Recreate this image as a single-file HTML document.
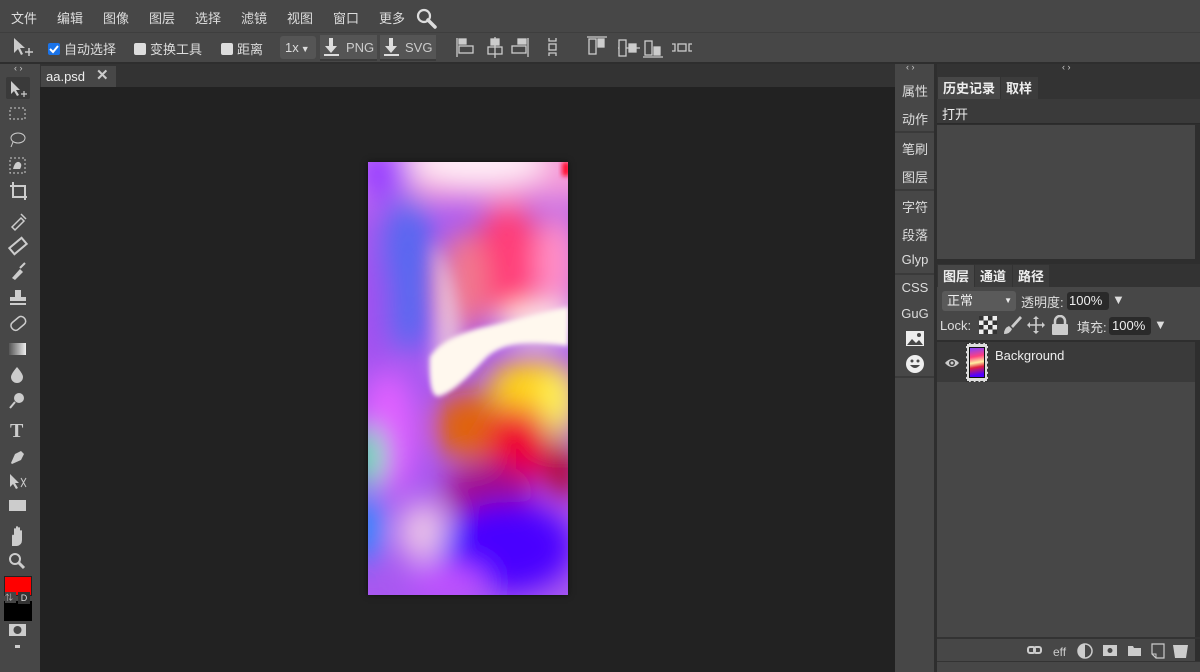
<!DOCTYPE html>
<html><head><meta charset="utf-8"><style>
*{box-sizing:border-box;margin:0;padding:0}
body{width:1200px;height:672px;overflow:hidden;background:#222;font-family:"Liberation Sans","Noto Sans CJK SC",sans-serif;color:#ddd;font-size:13px;position:relative}
.a{position:absolute}
.menu span{position:absolute;top:8px;font-size:13px;color:#ddd}
.bar{background:#474747}
.cb{display:inline-block;width:12px;height:12px;background:#ddd;border-radius:2px;vertical-align:-1px;margin-right:4px}
.rt{position:absolute;left:895px;width:40px;text-align:center;font-size:13px;color:#ddd}
.sep{position:absolute;height:2px;background:#3a3a3a}
.tab{position:absolute;height:23px;line-height:23px;font-weight:bold;font-size:13px;padding-left:5px;color:#eee}
</style></head><body>
<div class="a bar" style="left:0;top:0;width:1200px;height:32px"></div>
<div class="menu">
<span style="left:11px">文件</span><span style="left:57px">编辑</span><span style="left:103px">图像</span><span style="left:149px">图层</span><span style="left:195px">选择</span><span style="left:241px">滤镜</span><span style="left:287px">视图</span><span style="left:333px">窗口</span><span style="left:379px">更多</span>
</div>
<svg class="a" style="left:415px;top:7px" width="24" height="22"><circle cx="9" cy="9" r="6" fill="none" stroke="#ddd" stroke-width="2.2"/><line x1="13" y1="13" x2="20" y2="20" stroke="#ddd" stroke-width="3.5" stroke-linecap="round"/></svg>
<div class="a bar" style="left:0;top:32px;width:1200px;height:30px;border-top:1px solid #3e3e3e"></div>
<svg class="a" style="left:12px;top:37px" width="24" height="20"><path d="M2 1 L2 16 L6 12 L9 18 L11 17 L8 11 L13 11 Z" fill="#ccc"/><path d="M17 11v8M13 15h8" stroke="#ccc" stroke-width="1.5"/></svg>
<div class="a" style="left:48px;top:39px;font-size:13px"><span class="cb" style="background:#1a73e8;position:relative"><svg width="12" height="12" style="position:absolute;left:0;top:0"><path d="M2 6l3 3 5-6" stroke="#fff" stroke-width="2" fill="none"/></svg></span>自动选择</div>
<div class="a" style="left:134px;top:39px"><span class="cb"></span>变换工具</div>
<div class="a" style="left:221px;top:39px"><span class="cb"></span>距离</div>
<div class="a" style="left:280px;top:36px;width:36px;height:23px;background:#555;border-radius:3px;line-height:23px;padding-left:5px">1x<span style="font-size:9px;margin-left:2px">▼</span></div>
<div class="a" style="left:320px;top:35px;width:57px;height:26px;background:#555;border-bottom:2px solid #3a3a3a"></div>
<div class="a" style="left:380px;top:35px;width:56px;height:26px;background:#555;border-bottom:2px solid #3a3a3a"></div>
<svg class="a" style="left:322px;top:36px" width="20" height="22"><path d="M7 2h4v8h4l-6 7-6-7h4z" fill="#ddd"/><rect x="2" y="18" width="15" height="2" fill="#ddd"/></svg>
<div class="a" style="left:346px;top:40px;color:#ccc">PNG</div>
<svg class="a" style="left:382px;top:36px" width="20" height="22"><path d="M7 2h4v8h4l-6 7-6-7h4z" fill="#ddd"/><rect x="2" y="18" width="15" height="2" fill="#ddd"/></svg>
<div class="a" style="left:405px;top:40px;color:#ccc">SVG</div>
<svg class="a" style="left:455px;top:36px" width="240" height="24" stroke="#ccc" fill="none" stroke-width="1.3">
<line x1="2" y1="2" x2="2" y2="21"/><rect x="4" y="3" width="7" height="5" fill="#ccc"/><rect x="4" y="10" width="14" height="7"/>
<line x1="40" y1="1" x2="40" y2="22"/><rect x="36" y="3" width="8" height="6" fill="#ccc"/><rect x="33" y="11" width="14" height="7"/>
<line x1="73" y1="2" x2="73" y2="21"/><rect x="63" y="3" width="8" height="5" fill="#ccc"/><rect x="57" y="10" width="14" height="7"/>
<path d="M94 2v3h7V2M94 20v-3h7v3"/><rect x="94" y="8" width="7" height="6"/>
<line x1="132" y1="1" x2="152" y2="1"/><rect x="134" y="3" width="7" height="15"/><rect x="143" y="3" width="6" height="8" fill="#ccc"/>
<line x1="163" y1="12" x2="185" y2="12"/><rect x="164" y="4" width="7" height="16" fill="#474747"/><rect x="174" y="8" width="7" height="8" fill="#ccc"/>
<line x1="188" y1="21" x2="208" y2="21"/><rect x="190" y="5" width="7" height="14"/><rect x="199" y="11" width="6" height="8" fill="#ccc"/>
<path d="M217 8h3v7h-3M237 8h-3v7h3"/><rect x="223" y="8" width="8" height="7"/>
</svg>
<div class="a" style="left:0;top:62px;width:1200px;height:2px;background:#2e2e2e"></div>
<div class="a bar" style="left:0;top:64px;width:40px;height:608px"></div>
<div class="a" style="left:14px;top:63px;font-size:9px;color:#ccc">‹ ›</div>
<div class="a" style="left:6px;top:77px;width:24px;height:22px;background:#3a3a3a;border-radius:2px"></div>
<svg class="a" style="left:0;top:76px" width="40" height="596" fill="#ccc" stroke="#ccc">
<path d="M11 5v13l3-3 3 5 2-1-3-5h4z" stroke="none"/><path d="M24 15v6M21 18h6" stroke-width="1.2"/>
<rect x="10" y="32" width="15" height="11" fill="none" stroke-dasharray="2 2"/>
<ellipse cx="18" cy="62" rx="7" ry="5" fill="none"/><path d="M13 66l-2 5" fill="none"/>
<rect x="10" y="82" width="15" height="15" fill="none" stroke-dasharray="2 2"/><path d="M13 93q2-8 6-7q4 2 1 7z" stroke="none"/>
<path d="M13 106v15h14M10 110h15v14" fill="none" stroke-width="2"/>
<path d="M12 151l9-9 3 3-9 9z M21 138l5 5" fill="none" stroke-width="1.5"/>
<rect x="10" y="166" width="16" height="8" transform="rotate(-40 18 170)" fill="none" stroke-width="2"/>
<path d="M12 202l8-9 3 3-8 8z" stroke="none"/><path d="M20 192l5-5" stroke-width="2"/>
<rect x="15" y="214" width="6" height="7" stroke="none"/><rect x="10" y="221" width="16" height="4" stroke="none"/><rect x="10" y="227" width="16" height="2" stroke="none"/>
<rect x="10" y="243" width="16" height="9" rx="4" transform="rotate(-40 18 247)" fill="none" stroke-width="1.5"/>
<defs><linearGradient id="g"><stop offset="0" stop-color="#555"/><stop offset="1" stop-color="#eee"/></linearGradient></defs>
<rect x="9" y="267" width="17" height="12" fill="url(#g)" stroke="none"/>
<path d="M17 291q-6 7-6 10a6 6 0 0 0 12 0q0-3-6-10z" stroke="none"/>
<circle cx="19" cy="322" r="5" stroke="none"/><path d="M15 326l-5 6" stroke-width="2"/>
<text x="10" y="361" font-family="Liberation Serif" font-size="20" font-weight="bold" stroke="none">T</text>
<path d="M11 387l4-9 6-3 3 3-3 6-9 4z" stroke="none"/>
<path d="M10 398v13l3-3 3 5 2-1-3-5h4z" stroke="none"/><path d="M21 402l5 9M26 402l-5 9" stroke-width="1" fill="none"/>
<rect x="9" y="424" width="17" height="11" stroke="none"/>
<path d="M12 470v-10q0-2 2-1v-6q1-2 2 0v5-7q1-2 2 0v7-6q1-2 2 0v7-4q1-2 2 0v9q0 5-5 6z" stroke="none"/>
<circle cx="15" cy="483" r="5" fill="none" stroke-width="2"/><path d="M19 487l5 5" stroke-width="3"/>
<rect x="9" y="548" width="17" height="12" stroke="none"/><circle cx="17.5" cy="554" r="4" fill="#474747" stroke="none"/>
<rect x="15" y="569" width="5" height="3" stroke="none"/>
</svg>
<div class="a" style="left:4px;top:576px;width:28px;height:20px;background:#f00;border:1px solid #222"></div>
<div class="a" style="left:4px;top:601px;width:28px;height:20px;background:#000"></div>
<div class="a" style="left:5px;top:592px;width:11px;height:11px;background:#444;font-size:8px;color:#bbb">⇅</div>
<div class="a" style="left:18px;top:592px;width:12px;height:12px;background:#333;font-size:9px;color:#ddd;text-align:center;line-height:12px">D</div>
<div class="a" style="left:40px;top:64px;width:855px;height:23px;background:#333"></div>
<div class="a bar" style="left:41px;top:66px;width:75px;height:21px"></div>
<div class="a" style="left:46px;top:69px;font-size:13px;color:#eee">aa.psd</div>
<div class="a" style="left:96px;top:66px;font-size:15px;font-weight:bold;color:#ccc">✕</div>
<!-- image -->
<svg class="a" style="left:368px;top:162px;box-shadow:0 0 6px rgba(0,0,0,.6)" width="200" height="433">
<defs>
<filter id="b" x="-50%" y="-50%" width="200%" height="200%"><feGaussianBlur stdDeviation="14"/></filter>
<filter id="s" x="-50%" y="-50%" width="200%" height="200%"><feGaussianBlur stdDeviation="2.5"/></filter>
<filter id="w" x="-50%" y="-50%" width="200%" height="200%"><feGaussianBlur stdDeviation="8"/></filter>
<clipPath id="c"><rect width="200" height="433"/></clipPath>
</defs>
<g clip-path="url(#c)">
<rect width="200" height="433" fill="#a858f0"/>
<g filter="url(#b)">
<rect x="-30" y="-30" width="260" height="70" fill="#f49ad8"/>
<ellipse cx="110" cy="0" rx="70" ry="22" fill="#fff0f8"/>
<ellipse cx="10" cy="10" rx="30" ry="30" fill="#9a40ff"/>
<ellipse cx="40" cy="110" rx="28" ry="80" fill="#5868f0"/>
<ellipse cx="5" cy="150" rx="15" ry="60" fill="#a050f0"/>
<ellipse cx="140" cy="100" rx="35" ry="60" fill="#ff3e78"/>
<ellipse cx="190" cy="100" rx="22" ry="50" fill="#ff90c8"/>
<ellipse cx="95" cy="120" rx="25" ry="50" fill="#f07890"/>
<ellipse cx="170" cy="160" rx="40" ry="18" fill="#fff4ee"/>
<ellipse cx="165" cy="225" rx="45" ry="28" fill="#ffd418"/>
<ellipse cx="192" cy="240" rx="18" ry="35" fill="#fff45a"/>
<ellipse cx="100" cy="265" rx="35" ry="35" fill="#e06410"/>
<ellipse cx="150" cy="285" rx="30" ry="40" fill="#f00030"/>
<ellipse cx="195" cy="310" rx="15" ry="30" fill="#b00020"/>
<ellipse cx="120" cy="330" rx="45" ry="30" fill="#a00890"/>
<ellipse cx="20" cy="270" rx="28" ry="60" fill="#e060ff"/>
<ellipse cx="0" cy="295" rx="15" ry="30" fill="#40f0a0"/>
<ellipse cx="0" cy="365" rx="15" ry="35" fill="#2090ff"/>
<ellipse cx="55" cy="370" rx="25" ry="30" fill="#e8c0e8"/>
<ellipse cx="140" cy="385" rx="65" ry="45" fill="#4a00ff"/>
<ellipse cx="80" cy="420" rx="40" ry="18" fill="#c050ff"/>
</g>
<path filter="url(#w)" d="M64 80 C72 120 66 170 64 215 L95 200 C95 160 88 110 64 80 Z" fill="#f0d0dc" opacity=".75"/>
<path filter="url(#s)" d="M62 195 C61 222 63 236 72 234 C85 230 100 215 118 196 C135 180 160 178 200 184 L200 145 C170 152 140 160 112 166 C90 172 72 180 62 195 Z" fill="#fff8ee"/>
<rect x="194" y="0" width="8" height="14" fill="#ff1030" filter="url(#s)"/>
</g>
</svg>
<div class="a" style="left:895px;top:64px;width:305px;height:608px;background:#2e2e2e"></div>
<div class="a bar" style="left:895px;top:64px;width:39px;height:608px"></div>
<div class="a" style="left:906px;top:62px;font-size:9px;color:#ccc">‹ ›</div>
<div class="rt" style="top:81px">属性</div><div class="rt" style="top:109px">动作</div>
<div class="sep" style="left:895px;top:131px;width:39px"></div>
<div class="rt" style="top:139px">笔刷</div><div class="rt" style="top:167px">图层</div>
<div class="sep" style="left:895px;top:189px;width:39px"></div>
<div class="rt" style="top:197px">字符</div><div class="rt" style="top:225px">段落</div><div class="rt" style="top:252px">Glyp</div>
<div class="sep" style="left:895px;top:273px;width:39px"></div>
<div class="rt" style="top:280px">CSS</div><div class="rt" style="top:306px">GuG</div>
<svg class="a" style="left:906px;top:331px" width="18" height="15"><rect x="0" y="0" width="18" height="15" fill="#eee"/><path d="M1 14l5-6 4 4 3-3 4 5z" fill="#474747"/><circle cx="13" cy="4" r="2" fill="#474747"/></svg>
<svg class="a" style="left:905px;top:354px" width="20" height="20"><circle cx="10" cy="10" r="9" fill="#eee"/><circle cx="7" cy="7" r="1.5" fill="#474747"/><circle cx="13" cy="7" r="1.5" fill="#474747"/><path d="M5 11q5 6 10 0z" fill="#474747"/></svg>
<div class="sep" style="left:895px;top:376px;width:39px"></div>
<div class="a" style="left:937px;top:64px;width:263px;height:12px;background:#333"></div>
<div class="a" style="left:1062px;top:62px;font-size:9px;color:#ccc">‹ ›</div>
<div class="a" style="left:937px;top:76px;width:263px;height:23px;background:#333"></div>
<div class="tab bar" style="left:938px;top:77px;width:62px">历史记录</div>
<div class="tab" style="left:1001px;top:77px;width:37px;background:#3c3c3c">取样</div>
<div class="a" style="left:937px;top:99px;width:263px;height:25px;background:#3a3a3a;border-bottom:1px solid #2a2a2a"></div>
<div class="a" style="left:942px;top:104px;color:#eee">打开</div>
<div class="a bar" style="left:937px;top:125px;width:258px;height:134px"></div>
<div class="a" style="left:937px;top:264px;width:263px;height:23px;background:#333"></div>
<div class="tab bar" style="left:938px;top:265px;width:36px">图层</div>
<div class="tab" style="left:975px;top:265px;width:37px;background:#3c3c3c">通道</div>
<div class="tab" style="left:1013px;top:265px;width:36px;background:#3c3c3c">路径</div>
<div class="a bar" style="left:937px;top:287px;width:263px;height:53px"></div>
<div class="a" style="left:942px;top:291px;width:74px;height:20px;background:#5a5a5a;border-radius:3px;padding-left:5px;line-height:20px;color:#eee">正常<span style="position:absolute;right:4px;font-size:8px">▼</span></div>
<div class="a" style="left:1021px;top:292px">透明度:</div>
<div class="a" style="left:1067px;top:292px;width:42px;height:18px;background:#2a2a2a;border-radius:3px;padding-left:2px;line-height:18px;color:#eee">100%</div>
<div class="a" style="left:1112px;top:292px;color:#ddd">▼</div>
<div class="a" style="left:940px;top:318px">Lock:</div>
<svg class="a" style="left:979px;top:316px" width="18" height="18"><rect width="18" height="18" fill="#eee"/><g fill="#333"><rect x="0" y="0" width="4.5" height="4.5"/><rect x="9" y="0" width="4.5" height="4.5"/><rect x="4.5" y="4.5" width="4.5" height="4.5"/><rect x="13.5" y="4.5" width="4.5" height="4.5"/><rect x="0" y="9" width="4.5" height="4.5"/><rect x="9" y="9" width="4.5" height="4.5"/><rect x="4.5" y="13.5" width="4.5" height="4.5"/><rect x="13.5" y="13.5" width="4.5" height="4.5"/></g></svg>
<svg class="a" style="left:1003px;top:315px" width="20" height="20"><path d="M1 19q0-6 5-8l3 3q-2 5-8 5z" fill="#ccc"/><path d="M8 11l9-10 2 2-9 10z" fill="#ccc"/></svg>
<svg class="a" style="left:1026px;top:315px" width="20" height="20" stroke="#ccc" stroke-width="1.6" fill="#ccc"><path d="M10 2v16M2 10h16"/><path d="M10 1l-3 3h6zM10 19l-3-3h6zM1 10l3-3v6zM19 10l-3-3v6z" stroke="none"/></svg>
<svg class="a" style="left:1051px;top:315px" width="18" height="20"><path d="M4 9V6a5 5 0 0 1 10 0v3" stroke="#ccc" stroke-width="2.5" fill="none"/><rect x="1" y="9" width="16" height="11" rx="1" fill="#ccc"/></svg>
<div class="a" style="left:1077px;top:317px">填充:</div>
<div class="a" style="left:1109px;top:317px;width:42px;height:18px;background:#2a2a2a;border-radius:3px;padding-left:3px;line-height:18px;color:#eee">100%</div>
<div class="a" style="left:1154px;top:317px">▼</div>
<div class="a" style="left:937px;top:340px;width:258px;height:2px;background:#2e2e2e"></div>
<div class="a" style="left:937px;top:342px;width:258px;height:40px;background:#3a3a3a"></div>
<div class="a bar" style="left:937px;top:382px;width:258px;height:255px"></div>
<svg class="a" style="left:944px;top:357px" width="16" height="12"><path d="M1 6q7-8 14 0q-7 8-14 0z" fill="#ccc"/><circle cx="8" cy="6" r="3" fill="#3a3a3a"/><circle cx="8" cy="6" r="1.5" fill="#ccc"/></svg>
<div class="a" style="left:966px;top:343px;width:22px;height:39px;background:#ddd;border:1px dashed #333"></div>
<div class="a" style="left:969px;top:347px;width:16px;height:31px;background:linear-gradient(170deg,#8040ff,#ff4080 30%,#fff0a0 50%,#e02040 65%,#5000ff 90%);border:1px solid #111"></div>
<div class="a" style="left:995px;top:348px;color:#eee">Background</div>
<div class="a" style="left:937px;top:637px;width:263px;height:2px;background:#333"></div>
<div class="a bar" style="left:937px;top:639px;width:258px;height:22px"></div>
<div class="a" style="left:937px;top:661px;width:263px;height:11px;background:#474747;border-top:1px solid #333"></div>
<svg class="a" style="left:1025px;top:641px" width="170" height="20" fill="#ccc">
<rect x="3" y="6" width="7" height="6" rx="2" fill="none" stroke="#ccc" stroke-width="2"/><rect x="9" y="6" width="7" height="6" rx="2" fill="none" stroke="#ccc" stroke-width="2"/>
<text x="28" y="15" font-family="Liberation Sans" font-size="12">eff</text>
<circle cx="60" cy="10" r="7" fill="none" stroke="#ccc" stroke-width="1.5"/><path d="M60 3a7 7 0 0 0 0 14z"/>
<rect x="78" y="4" width="14" height="11"/><circle cx="85" cy="9.5" r="2.5" fill="#474747"/>
<path d="M103 5h5l1 2h7v8h-13z"/>
<path d="M127 3h12v14h-8l-4-4z" fill="none" stroke="#ccc" stroke-width="1.2"/><path d="M127 13h4v4"  fill="none" stroke="#ccc"/>
<path d="M148 4h15l-2 13h-11z"/>
</svg>
</body></html>
